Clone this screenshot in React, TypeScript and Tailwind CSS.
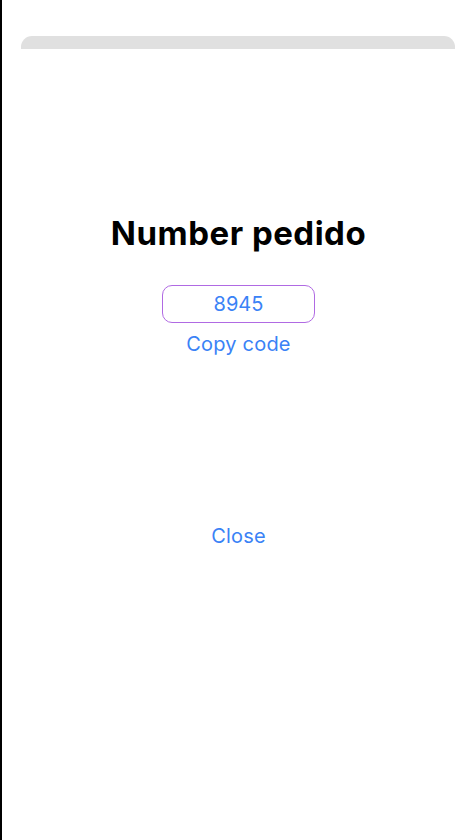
import React from 'react';

const App: React.FC = () => {
  return (
    <div className="h-[840px] w-[472px] bg-white border-l-2 border-black font-['Inter','Liberation_Sans',sans-serif]">
      <div className="pt-[36px] pl-[19px] pr-[17px]">
        <div className="h-[13px] rounded-t-[11px] bg-[#e0e0e0]" />
      </div>

      {/* Order number */}
      <div className="flex flex-col items-center pt-[164px] pl-[3px]">
        <h1 className="text-[33px] leading-[40px] font-bold text-black tracking-[0.5px]">Number pedido</h1>
        <div className="mt-[32px] flex h-[38px] w-[153px] items-center justify-center rounded-[10px] border-[1.5px] border-[#b06ae3] text-[20px] text-[#3a82f6]">
          8945
        </div>
        <button className="mt-[6px] text-[20px] leading-[30px] tracking-[0.2px] text-[#3a82f6]">Copy code</button>
        <button className="mt-[162px] text-[20px] leading-[30px] tracking-[0.2px] text-[#3a82f6]">Close</button>
      </div>
    </div>
  );
};

export default App;
